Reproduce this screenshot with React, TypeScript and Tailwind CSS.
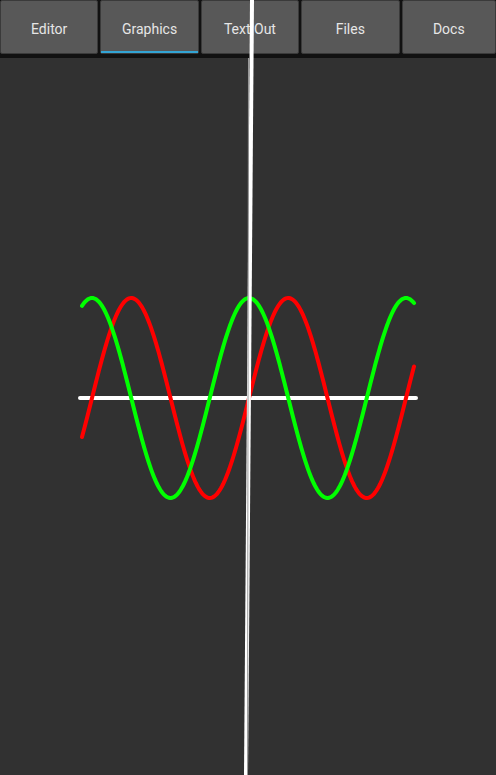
import React from 'react';

const TABS = ['Editor', 'Graphics', 'Text Out', 'Files', 'Docs'];

// wave plot settings, measured off the canvas
const X0 = 249;
const Y0 = 398;
const AMP = 100;
const PERIOD = 157;

const wavePath = (fn: (t: number) => number) => {
  const pts: string[] = [];
  for (let x = 82; x <= 414; x += 1) {
    const t = (2 * Math.PI * (x - X0)) / PERIOD;
    const y = Y0 - AMP * fn(t);
    pts.push(`${x === 82 ? 'M' : 'L'}${x},${y.toFixed(2)}`);
  }
  return pts.join(' ');
};

const App = () => {
  return (
    <div className="relative w-[496px] h-[775px] bg-[#313131] overflow-hidden font-['Roboto',sans-serif]">
      <div className="flex gap-[2px] bg-[#111] pb-[4px] h-[58px]">
        {TABS.map((tab) => (
          <div
            key={tab}
            className={`relative flex-1 flex items-center justify-center pt-[4px] bg-[#585858] border border-[#3a3a3a] rounded-[2px] text-[14px] text-[#e6e6e6] ${
              tab === 'Docs' ? 'flex-[0.96]' : ''
            }`}
          >
            {tab}
            {tab === 'Graphics' && (
              <div className="absolute left-0 right-0 bottom-0 h-[2px] bg-[#33a4d4]" />
            )}
          </div>
        ))}
      </div>

      <svg className="absolute inset-0" width="496" height="775" viewBox="0 0 496 775">
        <line x1="80" y1="398" x2="416" y2="398" stroke="#fff" strokeWidth="4" strokeLinecap="round" />
        <path d={wavePath(Math.sin)} fill="none" stroke="#ff0000" strokeWidth="4" strokeLinecap="round" />
        <path d={wavePath(Math.cos)} fill="none" stroke="#00ff00" strokeWidth="4" strokeLinecap="round" />
        <line x1="252" y1="0" x2="246" y2="775" stroke="#fff" strokeWidth="4" />
        <line x1="248.5" y1="58" x2="247.5" y2="775" stroke="#9a9a9a" strokeWidth="1" />
      </svg>
    </div>
  );
};

export default App;
